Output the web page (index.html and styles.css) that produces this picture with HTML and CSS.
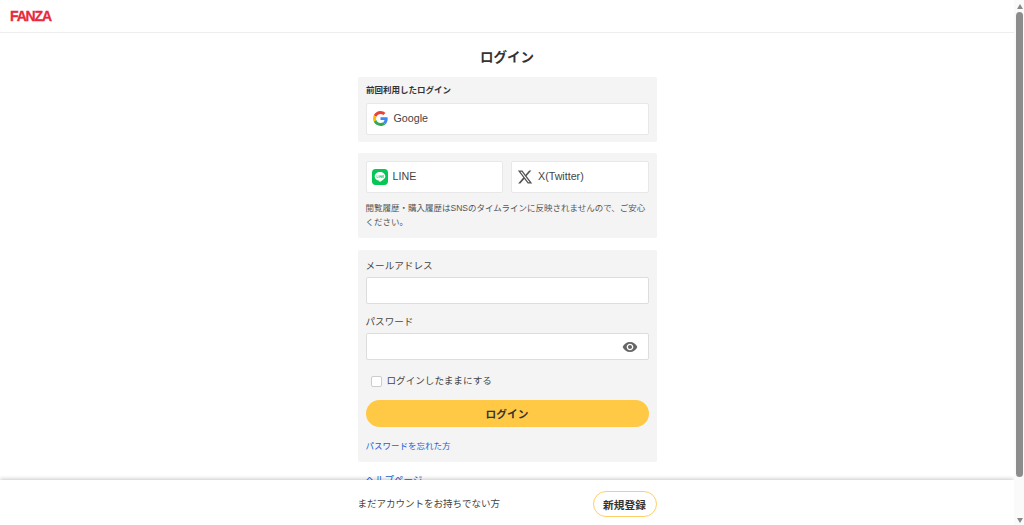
FILE: index.html
```html
<!DOCTYPE html>
<html lang="ja">
<head>
<meta charset="utf-8">
<title>ログイン</title>
<link rel="stylesheet" href="styles.css">
</head>
<body>
<div class="app">
  <div class="viewport">
    <header class="topbar"><span class="logo">FANZA</span></header>
    <main class="content">
      <h1 class="title">ログイン</h1>
      <section class="panel panel-last">
        <p class="panel-label">前回利用したログイン</p>
        <a class="sns sns-full">
          <svg class="sns-icon" viewBox="0 0 48 48"><path fill="#EA4335" d="M24 9.5c3.54 0 6.71 1.22 9.21 3.6l6.85-6.85C35.9 2.38 30.47 0 24 0 14.62 0 6.51 5.38 2.56 13.22l7.98 6.19C12.43 13.72 17.74 9.5 24 9.5z"/><path fill="#4285F4" d="M46.98 24.55c0-1.57-.15-3.09-.38-4.55H24v9.02h12.94c-.58 2.96-2.26 5.48-4.78 7.18l7.73 6c4.51-4.18 7.09-10.36 7.09-17.65z"/><path fill="#FBBC05" d="M10.53 28.59c-.48-1.45-.76-2.99-.76-4.59s.27-3.14.76-4.59l-7.98-6.19C.92 16.46 0 20.12 0 24c0 3.88.92 7.54 2.56 10.78l7.97-6.19z"/><path fill="#34A853" d="M24 48c6.48 0 11.93-2.13 15.89-5.81l-7.73-6c-2.15 1.45-4.92 2.3-8.16 2.3-6.26 0-11.57-4.22-13.47-9.91l-7.98 6.19C6.51 42.62 14.62 48 24 48z"/></svg>
          <span class="sns-name">Google</span>
        </a>
      </section>
      <section class="panel panel-sns">
        <div class="sns-row">
          <a class="sns">
            <svg class="sns-icon sns-line" viewBox="0 0 24 24"><rect width="24" height="24" rx="5.5" fill="#06C755"/><path fill="#fff" d="M12 4.6c-4.4 0-8 2.9-8 6.5 0 3.2 2.8 5.9 6.7 6.4.8.2.5 1 .4 1.5 0 .5.4.6.9.3 1.2-.7 3.9-2.4 5.6-4.1 1.5-1.3 2.4-2.6 2.4-4.1 0-3.6-3.6-6.5-8-6.5z"/><path fill="#06C755" d="M7 9.3h.8v3h1.6v.8H7zM10.1 9.3h.8v3.8h-.8zM11.6 9.3h.7l1.7 2.4V9.3h.8v3.8h-.7l-1.7-2.4v2.4h-.8zM15.6 9.3h2.4v.8h-1.6v.7H18v.8h-1.6v.7H18v.8h-2.4z"/></svg>
            <span class="sns-name">LINE</span>
          </a>
          <a class="sns">
            <svg class="sns-icon sns-x" viewBox="0 0 24 24"><path fill="#555" d="M18.244 2.25h3.308l-7.227 8.26 8.502 11.24H16.17l-5.214-6.817L4.99 21.75H1.68l7.73-8.835L1.254 2.25H8.08l4.713 6.231zm-1.161 17.52h1.833L7.084 4.126H5.117z"/></svg>
            <span class="sns-name">X(Twitter)</span>
          </a>
        </div>
        <p class="note">閲覧履歴・購入履歴はSNSのタイムラインに反映されませんので、ご安心ください。</p>
      </section>
      <form class="panel panel-form">
        <label class="field-label" for="mail">メールアドレス</label>
        <input class="input" id="mail" type="text">
        <label class="field-label field-label-second" for="pass">パスワード</label>
        <div class="input-wrap">
          <input class="input input-pass" id="pass" type="password">
          <svg class="eye" viewBox="0 0 24 24"><path fill="#666" d="M12 4.5C7 4.5 2.73 7.61 1 12c1.73 4.39 6 7.5 11 7.5s9.27-3.11 11-7.5c-1.73-4.39-6-7.5-11-7.5zM12 17c-2.76 0-5-2.24-5-5s2.24-5 5-5 5 2.24 5 5-2.24 5-5 5zm0-8c-1.66 0-3 1.34-3 3s1.34 3 3 3 3-1.34 3-3-1.34-3-3-3z"/></svg>
        </div>
        <label class="keep"><input class="check" type="checkbox"><span>ログインしたままにする</span></label>
        <button class="submit" type="button">ログイン</button>
        <a class="link forgot">パスワードを忘れた方</a>
      </form>
      <a class="link help">ヘルプページ</a>
    </main>
    <footer class="signup">
      <div class="signup-inner">
        <span class="signup-text">まだアカウントをお持ちでない方</span>
        <a class="signup-btn">新規登録</a>
      </div>
    </footer>
  </div>
  <div class="scrollbar">
    <span class="arrow arrow-up"></span>
    <span class="thumb"></span>
    <span class="arrow arrow-down"></span>
  </div>
</div>
</body>
</html>
```
FILE: styles.css
```css
* { box-sizing: border-box; }
html, body { margin: 0; height: 525px; overflow: hidden; background: #fff; }
body { font-family: "Liberation Sans", "Noto Sans CJK JP", sans-serif; color: #333; }
p, h1 { margin: 0; }

.app { display: flex; height: 525px; }
.viewport { position: relative; flex: 1; min-width: 0; overflow: hidden; }

.topbar { height: 33px; border-bottom: 1px solid #eee; padding: 9px 0 0 10px; }
.logo { display: block; font-size: 14px; line-height: 15px; font-weight: 700; color: #e9283c; letter-spacing: -1.15px; -webkit-text-stroke: .3px #e9283c; }

.content { width: 299px; margin: 0 auto; }
.title { font-size: 13.5px; line-height: 20px; font-weight: 700; text-align: center; color: #333; margin-top: 15px; margin-bottom: 9px; }

.panel { background: #f4f4f4; border-radius: 2px; padding: 8px; margin-bottom: 11px; }
.panel-last { height: 65px; padding-top: 8px; }
.panel-sns { padding-bottom: 9px; margin-bottom: 12px; }
.panel-label { font-size: 8.5px; line-height: 11px; font-weight: 700; margin-bottom: 7px; padding-left: .5px; }

.sns-row { display: flex; gap: 8px; }
.sns { flex: 1; display: flex; align-items: center; gap: 6px; height: 32px; padding: 0 0 2px 6px; background: #fff; border: 1px solid #e8e8e8; border-radius: 2px; }
.sns-full { height: 32px; }
.sns-icon { width: 15px; height: 15px; flex: none; }
.sns-line { width: 16px; height: 16px; margin: 2px -1px 0 -1px; }
.sns-x { width: 16px; height: 16px; margin: 2px -1px 0 -1px; }
.sns-name { font-size: 10.7px; line-height: 16px; color: #444; }

.note { font-size: 8.5px; line-height: 14px; color: #555; margin-top: 8px; }

.panel-form { height: 212px; padding-top: 9px; margin-bottom: 0; }
.field-label { display: block; font-size: 9.6px; line-height: 13px; color: #444; margin-bottom: 5px; }
.field-label-second { margin-top: 11px; }
.input { display: block; width: 100%; height: 27px; background: #fff; border: 1px solid #ddd; border-radius: 2px; padding: 0 6px; outline: none; }
.input-wrap { position: relative; }
.eye { position: absolute; right: 11px; top: 6px; width: 16px; height: 16px; }

.keep { display: flex; align-items: center; gap: 5px; margin: 14px 0 0 5px; font-size: 9.6px; line-height: 14px; color: #444; }
.check { appearance: none; -webkit-appearance: none; width: 11px; height: 11px; margin: 0; background: #fff; border: 1px solid #ccc; border-radius: 2px; }

.submit { display: block; width: 100%; height: 27px; margin-top: 12px; background: #ffc845; border: 0; border-radius: 14px; font-family: inherit; font-size: 10.7px; font-weight: 700; color: #333; }

.link { display: block; font-size: 8.5px; line-height: 12px; color: #1a62d6; }
.forgot { margin-top: 13px; }
.help { margin: 12px 0 0 8px; font-size: 9.5px; }

.signup { position: absolute; left: 0; right: 0; bottom: 0; height: 45px; padding-top: 3px; background: #fff; box-shadow: 0 -1px 4px rgba(0,0,0,.22); }
.signup-inner { width: 299px; height: 100%; margin: 0 auto; display: flex; align-items: center; justify-content: space-between; }
.signup-text { font-size: 9.5px; color: #444; padding-bottom: 2px; }
.signup-btn { display: flex; align-items: center; justify-content: center; width: 64px; height: 26px; border: 1px solid #ffcf66; border-radius: 13px; font-size: 10.7px; font-weight: 700; color: #333; background: #fff; }

.scrollbar { width: 10px; flex: none; background: #fafafa; display: flex; flex-direction: column; align-items: center; padding: 4px 0 2px 1px; }
.arrow { width: 0; height: 0; flex: none; border-left: 3.5px solid transparent; border-right: 3.5px solid transparent; }
.arrow-up { border-bottom: 5px solid #888; }
.arrow-down { border-top: 5px solid #888; margin-top: auto; }
.thumb { width: 7px; height: 465px; margin-top: 3px; background: #8c8c8c; border-radius: 3.5px; }
```
